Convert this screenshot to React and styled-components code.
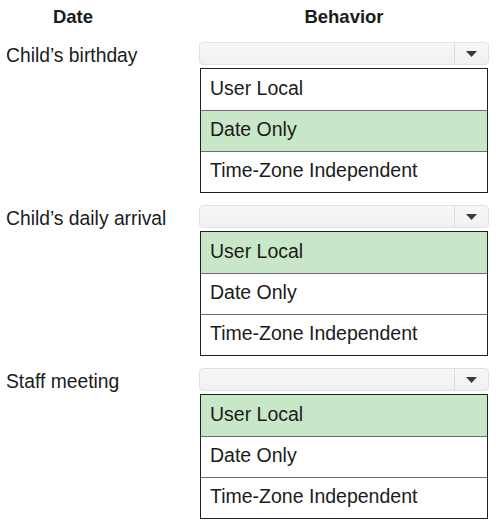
import styled, { createGlobalStyle } from "styled-components";

const GlobalStyle = createGlobalStyle`
  body {
    margin: 0;
    background: #ffffff;
    font-family: "Liberation Sans", Arial, sans-serif;
    color: #1b1b1b;
  }
`;

const Page = styled.div`
  width: 496px;
  padding-top: 6px;
`;

const HeadRow = styled.div`
  display: grid;
  grid-template-columns: 199px 290px;
  height: 36px;
`;

const Head = styled.div`
  font-weight: bold;
  font-size: 18.5px;
  line-height: 22px;
  text-align: center;
  width: ${(p) => (p.narrow ? "146px" : "auto")};
`;

const Section = styled.div`
  display: grid;
  grid-template-columns: 199px 290px;
  height: 163px;
`;

const Label = styled.div`
  padding-left: 6px;
  padding-top: 3px;
  font-size: 19.3px;
  line-height: 22px;
`;

const Column = styled.div`
  display: flex;
  flex-direction: column;
  gap: 3px;
`;

const Select = styled.div`
  height: 23px;
  box-sizing: border-box;
  border: 1px solid #e2e2e2;
  border-radius: 4px;
  background: linear-gradient(#f7f7f7, #f1f1f1);
  display: flex;
  justify-content: flex-end;
`;

const Caret = styled.div`
  width: 33px;
  border-left: 1px solid #dcdcdc;
  display: flex;
  align-items: center;
  justify-content: center;
`;

const List = styled.div`
  margin-left: 1px;
  width: 288px;
  box-sizing: border-box;
  border: 1px solid #1f1f1f;
  display: flex;
  flex-direction: column;
`;

const Item = styled.div`
  height: 41px;
  box-sizing: border-box;
  padding: 0 9px 3px;
  display: flex;
  align-items: center;
  font-size: 19.5px;
  background: ${(p) => (p.selected ? "#c8e6c8" : "#ffffff")};
  border-top: ${(p) => (p.first ? "none" : "1px solid #6d6d6d")};
`;

const options = ["User Local", "Date Only", "Time-Zone Independent"];

const rows = [
  { label: "Child\u2019s birthday", selected: 1 },
  { label: "Child\u2019s daily arrival", selected: 0 },
  { label: "Staff meeting", selected: 0 },
];

const App = () => {
  return (
    <Page>
      <GlobalStyle />
      <HeadRow>
        <Head narrow>Date</Head>
        <Head>Behavior</Head>
      </HeadRow>
      {rows.map((row, index) => (
        <Section key={index}>
          <Label>{row.label}</Label>
          <Column>
            <Select>
              <Caret>
                <svg width="11" height="6" viewBox="0 0 11 6">
                  <path d="M0 0 L11 0 L5.5 6 Z" fill="#3a3a3a" />
                </svg>
              </Caret>
            </Select>
            <List>
              {options.map((opt, i) => (
                <Item key={opt} first={i === 0} selected={i === row.selected}>
                  {opt}
                </Item>
              ))}
            </List>
          </Column>
        </Section>
      ))}
    </Page>
  );
};

export default App;
